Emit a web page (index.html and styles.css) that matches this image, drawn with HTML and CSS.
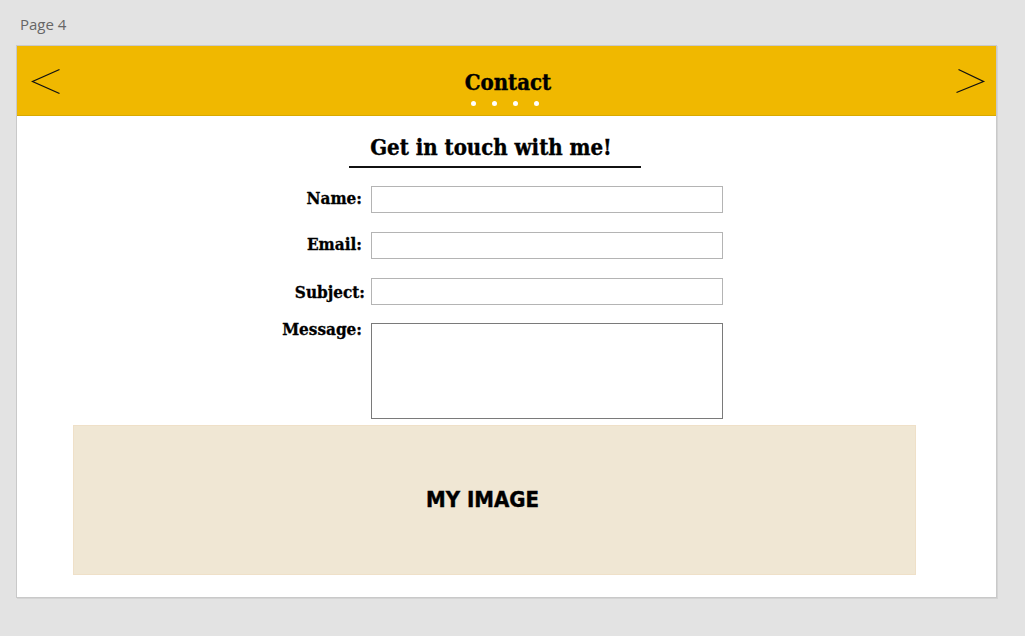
FILE: index.html
```html
<!DOCTYPE html>
<html lang="en">
<head>
<meta charset="utf-8">
<title>Page 4 - Contact</title>
<link rel="stylesheet" href="styles.css">
</head>
<body>
  <div class="page-label">Page 4</div>
  <div class="frame">
    <header class="topbar">
      <svg class="arrow arrow-left" width="30" height="28" viewBox="0 0 30 28" aria-hidden="true">
        <polyline points="28.5,1.5 1.5,13.5 28.5,25.5" fill="none" stroke="#111" stroke-width="1.3"/>
      </svg>
      <div class="title-wrap">
        <h1 class="title">Contact</h1>
        <div class="dots"><span></span><span></span><span></span><span></span></div>
      </div>
      <svg class="arrow arrow-right" width="30" height="28" viewBox="0 0 30 28" aria-hidden="true">
        <polyline points="2.5,1.5 27.5,13.5 0.5,24.5" fill="none" stroke="#111" stroke-width="1.3"/>
      </svg>
    </header>
    <main class="content">
      <h2 class="heading">Get in touch with me!</h2>
      <form class="form">
        <label class="label" for="name">Name:</label>
        <input class="field" id="name" type="text">
        <label class="label" for="email">Email:</label>
        <input class="field" id="email" type="text">
        <label class="label label-subject" for="subject">Subject:</label>
        <input class="field" id="subject" type="text">
        <label class="label label-top" for="message">Message:</label>
        <textarea class="field area" id="message"></textarea>
      </form>
      <div class="image-box"><span class="image-text">MY IMAGE</span></div>
    </main>
  </div>
</body>
</html>
```
FILE: styles.css
```css
html, body {
  margin: 0;
  padding: 0;
}
body {
  background: #e3e3e3;
  width: 1025px;
  height: 636px;
  overflow: hidden;
}
.page-label {
  font-family: "Open Sans", "Noto Sans", sans-serif;
  font-size: 15px;
  line-height: 18px;
  color: #666;
  padding: 15px 0 0 20px;
  margin-bottom: 12px;
}
.frame {
  margin-left: 16px;
  width: 979px;
  height: 551px;
  border: 1px solid #c9c9c9;
  box-shadow: 1px 1px 0 #d4d4d4;
  background: #fff;
  display: flex;
  flex-direction: column;
}
.topbar {
  height: 69px;
  background: #f0b800;
  border-bottom: 1px solid #d8a900;
  display: grid;
  grid-template-columns: 1fr auto 1fr;
  align-items: center;
  padding: 0 10px 0 14px;
}
.arrow-left {
  justify-self: start;
  margin-top: 2px;
}
.arrow-right {
  justify-self: end;
  margin-top: 2px;
}
.title-wrap {
  align-self: stretch;
  display: flex;
  flex-direction: column;
  align-items: center;
  justify-content: flex-end;
  padding: 0 7px 9px 0;
}
.title {
  margin: 0 0 7px 6px;
  font-family: "DejaVu Serif Condensed", "DejaVu Serif", "Liberation Serif", serif;
  font-weight: bold;
  font-size: 22px;
  line-height: 24px;
  color: #000;
  -webkit-text-stroke: 0.4px #000;
}
.dots {
  display: flex;
  gap: 16px;
}
.dots span {
  width: 5px;
  height: 5px;
  border-radius: 50%;
  background: #fff;
}
.content {
  flex: 1;
  display: flex;
  flex-direction: column;
  align-items: center;
  padding: 0 80px 0 56px;
}
.heading {
  margin: 18px 0 0;
  width: 292px;
  text-align: center;
  font-family: "DejaVu Serif Condensed", "DejaVu Serif", "Liberation Serif", serif;
  font-weight: bold;
  font-size: 22px;
  line-height: 26px;
  padding-bottom: 6px;
  border-bottom: 2px solid #111;
  color: #000;
  -webkit-text-stroke: 0.4px #000;
  text-indent: -7px;
}
.form {
  margin-top: 18px;
  display: grid;
  grid-template-columns: 96px 352px;
  column-gap: 9px;
  row-gap: 19px;
  align-items: center;
}
.label {
  justify-self: end;
  font-family: "DejaVu Serif Condensed", "DejaVu Serif", "Liberation Serif", serif;
  font-weight: bold;
  font-size: 17px;
  line-height: 20px;
  color: #000;
  margin-top: -4px;
  -webkit-text-stroke: 0.3px #000;
}
.label-subject {
  margin-right: -3px;
  margin-top: 0;
}
.label-top {
  align-self: start;
  margin-top: -5px;
}
.field {
  box-sizing: border-box;
  width: 352px;
  height: 27px;
  margin: 0;
  border: 1px solid #b4b4b4;
  background: #fff;
  font: 14px "Liberation Sans", sans-serif;
  padding: 2px 4px;
}
.area {
  height: 96px;
  margin-top: -1px;
  border: 1px solid #7a7a7a;
  resize: none;
}
.image-box {
  margin-top: 6px;
  align-self: stretch;
  height: 150px;
  background: #f0e7d4;
  border: 1px solid #efe0c8;
  box-sizing: border-box;
  display: flex;
  align-items: center;
  justify-content: center;
  padding: 0 24px 1px 0;
}
.image-text {
  font-family: "DejaVu Sans Condensed", "DejaVu Sans", "Liberation Sans", sans-serif;
  font-weight: bold;
  font-size: 22px;
  color: #000;
  -webkit-text-stroke: 0.4px #000;
}
```
